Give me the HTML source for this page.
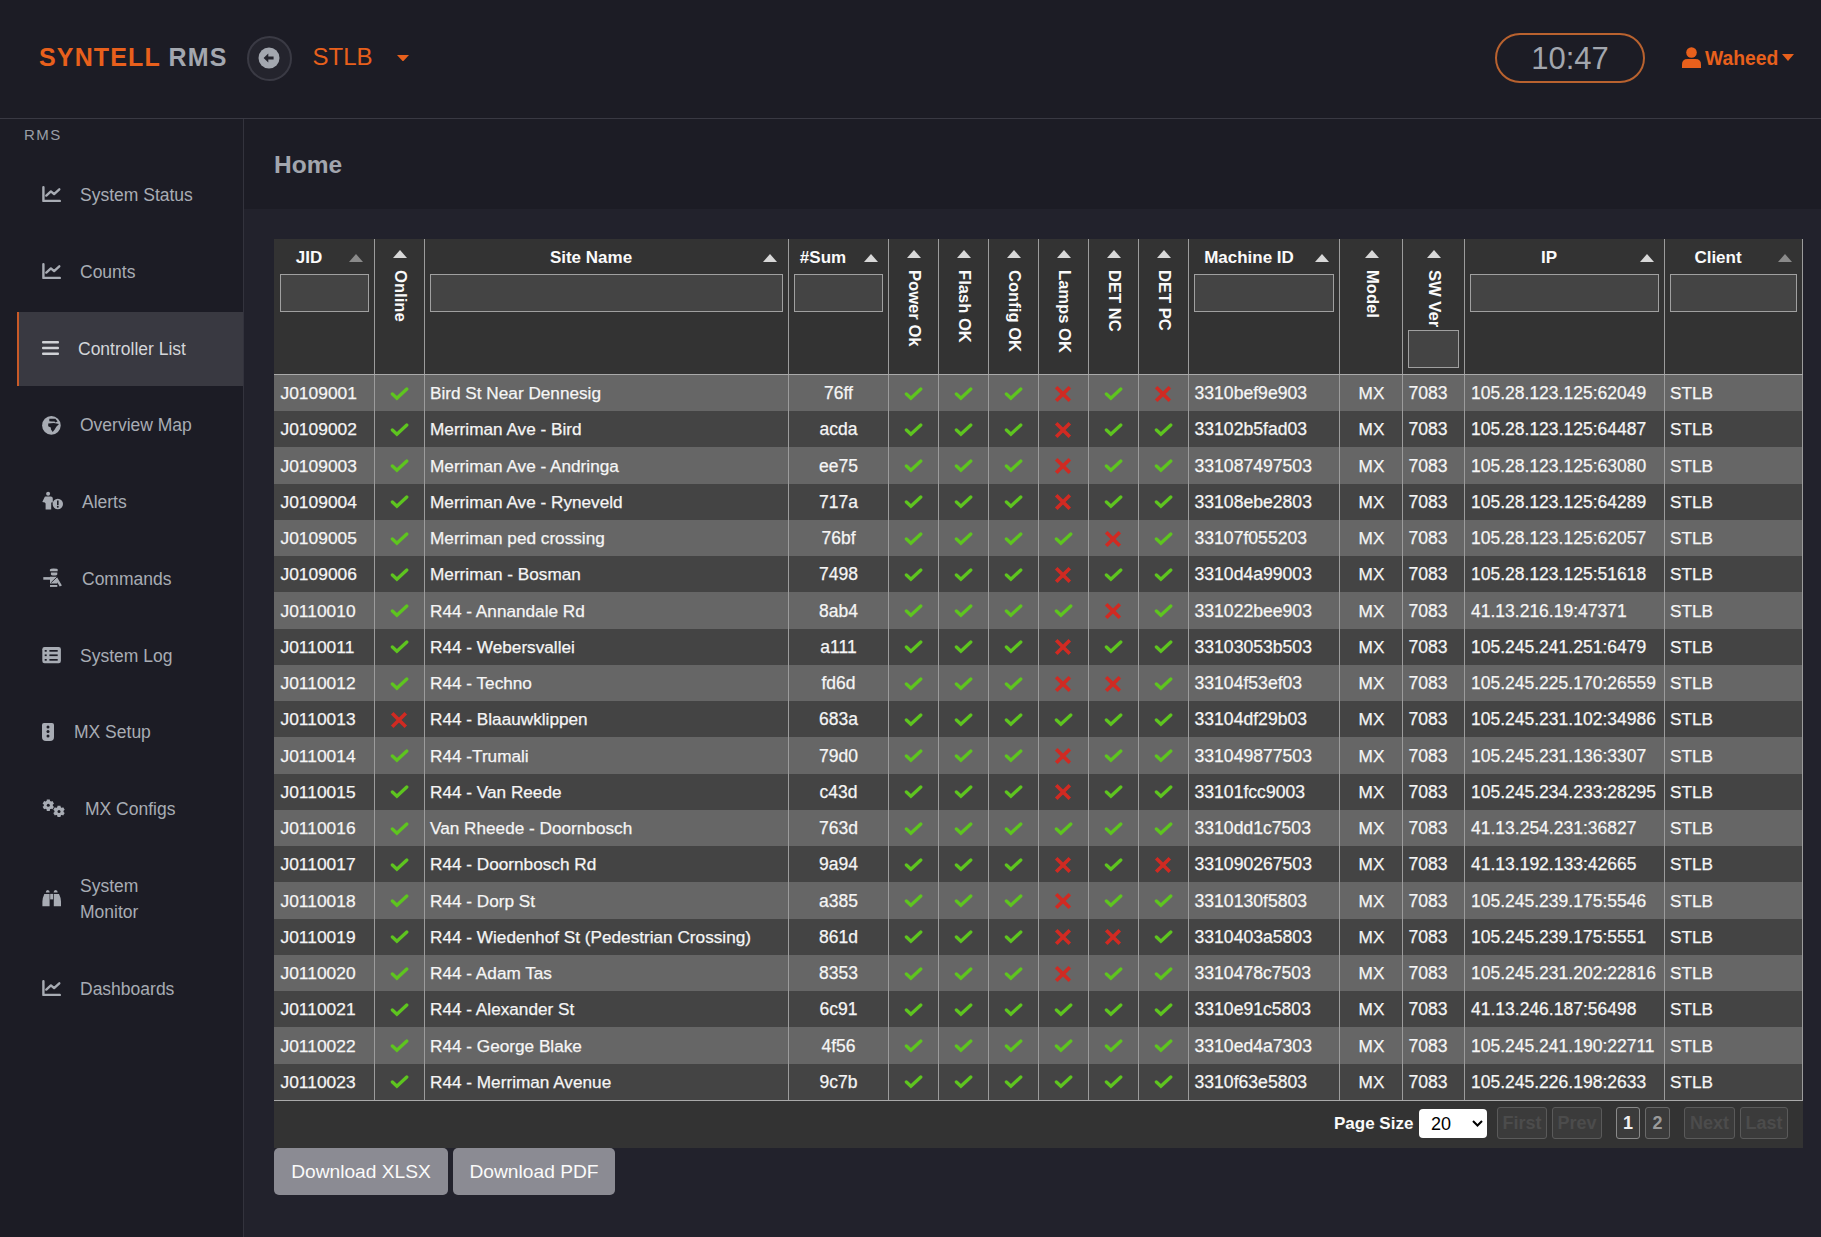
<!DOCTYPE html><html><head><meta charset="utf-8"><title>Syntell RMS</title><style>
*{box-sizing:border-box;margin:0;padding:0}
html,body{width:1821px;height:1237px;overflow:hidden;background:#1c1c25;font-family:"Liberation Sans",sans-serif}
.a{position:absolute}
.hdr{left:0;top:0;width:1821px;height:118px;background:#1c1c25}
.hline{left:0;top:118px;width:1821px;height:1px;background:#393943}
.sline{left:243px;top:119px;width:1px;height:1118px;background:#33333d}
.content{left:244px;top:209px;width:1577px;height:1028px;background:#22222c}
.brand{left:39px;top:41px;font-size:25px;font-weight:bold;letter-spacing:1.15px;white-space:nowrap;line-height:32px}
.brand .o{color:#e8601c}.brand .g{color:#a3a7af}
.circ{left:246.5px;top:35.5px;width:45px;height:45px;border-radius:50%;border:2.5px solid #3a3a44;background:#24242d}
.stlb{left:312.5px;top:40px;font-size:24px;color:#e8601c;line-height:34px}
.clock{left:1495px;top:33px;width:150px;height:50px;border:2px solid #b9622f;border-radius:25px;color:#a2a6ae;font-size:31px;text-align:center;line-height:48px}
.user{left:1705px;top:45.5px;font-size:19.3px;font-weight:bold;color:#e8601c;line-height:26px}
.side{color:#a8acb4;font-size:17.5px;line-height:26px;white-space:nowrap}
.rmsl{left:24px;top:124.6px;font-size:15px;color:#9a9ea6;letter-spacing:1.5px;line-height:20px}
.act{left:17px;top:312px;width:226px;height:74px;background:#393941;border-left:2.5px solid #c85a28}
.title{left:274px;top:150px;font-size:24.5px;font-weight:bold;color:#a2a6ae;line-height:30px}
.tbl{left:274px;top:239px;width:1529px;height:909px;background:#333333}
.row{left:274px;width:1528px;height:36.25px}
.odd{background:#666666}.even{background:#444444}
.vl{width:1px;background:#9c9c9c}
.hl{height:1px;background:#aaaaaa}
.cell{color:#f5f5f5;font-size:17.2px;line-height:36.25px;white-space:nowrap;-webkit-text-stroke:0.25px #f5f5f5}
.th{color:#fafafa;font-size:17px;font-weight:bold;line-height:22px;white-space:nowrap}
.inp{height:38px;border:1px solid #a0a0a0;background:#444444}
.rot{transform-origin:0 0;transform:rotate(90deg);color:#fafafa;font-size:16.6px;font-weight:bold;line-height:22px;white-space:nowrap}
.btn{background:#8b8b93;color:#fafafa;font-size:19.2px;border-radius:5px;text-align:center;line-height:48px}
.pb{border:1px solid #5a5a5a;background:#3b3b3b;border-radius:3px;color:#4c4c4c;font-size:18px;font-weight:bold;text-align:center;line-height:30px}
svg.ic{display:block}
</style></head><body>
<div class="a hdr"></div><div class="a hline"></div><div class="a sline"></div><div class="a content"></div>
<div class="a brand"><span class="o">SYNTELL</span><span style="display:inline-block;width:7.5px"></span><span class="g">RMS</span></div>
<div class="a circ"></div>
<svg class="a" style="left:258px;top:47px" width="22" height="22" viewBox="0 0 22 22"><circle cx="11" cy="11" r="10.5" fill="#a3a7af"/><path d="M5.6 11 L10.3 6.6 L10.3 9.4 L15.6 9.4 L15.6 12.6 L10.3 12.6 L10.3 15.4 Z" fill="#24242d"/></svg>
<div class="a stlb">STLB</div>
<svg class="a" style="left:396.5px;top:54.5px" width="12" height="6.5" viewBox="0 0 12 6.5"><path d="M0 0 L12 0 L6 6.5 Z" fill="#e8601c"/></svg>
<div class="a clock">10:47</div>
<svg class="a" style="left:1682px;top:47px" width="19" height="21" viewBox="0 0 19 21"><circle cx="9.5" cy="5.5" r="5.3" fill="#e8601c"/><path d="M0 21 L0 17.5 Q0 12 5.5 12 L13.5 12 Q19 12 19 17.5 L19 21 Z" fill="#e8601c"/></svg>
<div class="a user">Waheed</div>
<svg class="a" style="left:1782px;top:54px" width="12" height="7" viewBox="0 0 12 7"><path d="M0 0 L12 0 L6 7 Z" fill="#e8601c"/></svg>
<div class="a rmsl">RMS</div>
<div class="a act"></div>
<svg class="a" style="left:42px;top:186px" width="20" height="17" viewBox="0 0 20 17"><path d="M1.4 1.2 V14.9 H17.8" fill="none" stroke="#a8acb4" stroke-width="2.4" stroke-linecap="round" stroke-linejoin="round"/><path d="M4.3 9.6 L8.9 5.4 L12.1 8.1 L17.3 3.3" fill="none" stroke="#a8acb4" stroke-width="2.4" stroke-linecap="round" stroke-linejoin="round"/></svg>
<div class="a side" style="left:80px;top:182px;color:#a8acb4">System Status</div>
<svg class="a" style="left:42px;top:263px" width="20" height="17" viewBox="0 0 20 17"><path d="M1.4 1.2 V14.9 H17.8" fill="none" stroke="#a8acb4" stroke-width="2.4" stroke-linecap="round" stroke-linejoin="round"/><path d="M4.3 9.6 L8.9 5.4 L12.1 8.1 L17.3 3.3" fill="none" stroke="#a8acb4" stroke-width="2.4" stroke-linecap="round" stroke-linejoin="round"/></svg>
<div class="a side" style="left:80px;top:259px;color:#a8acb4">Counts</div>
<svg class="a" style="left:42px;top:341px" width="17" height="14" viewBox="0 0 17 14"><rect x="0" y="0" width="17" height="2.6" rx="1" fill="#d0d2d6"/><rect x="0" y="5.7" width="17" height="2.6" rx="1" fill="#d0d2d6"/><rect x="0" y="11.4" width="17" height="2.6" rx="1" fill="#d0d2d6"/></svg>
<div class="a side" style="left:78px;top:336px;color:#d4d6da">Controller List</div>
<svg class="a" style="left:42px;top:415.5px" width="19" height="19" viewBox="0 0 19 19"><circle cx="9.4" cy="9.4" r="9.3" fill="#a8acb4"/><path d="M7.3 2.7 L13.4 2.8 L15.6 5.6 L13.2 6.4 L12.6 5.5 L9.9 5.4 L7.3 5.3 Z M6.2 7.6 L11.8 7.1 L17 8.1 L14.3 10.7 L12.7 13.6 L10.7 16 L9 13.4 L8.8 11.6 L6.2 10.2 Z" fill="#1c1c25"/></svg>
<div class="a side" style="left:80px;top:412px;color:#a8acb4">Overview Map</div>
<svg class="a" style="left:42px;top:491px" width="21" height="19" viewBox="0 0 21 19"><circle cx="6.1" cy="2.8" r="2" fill="#a8acb4"/><path d="M3.5 5.6 H8.8 Q10.8 5.6 10.8 7.6 V11.6 H9.2 V18.6 H3.6 V12.4 L2.8 11.6 L0.3 10.9 L2.2 7 Q2.8 5.6 3.5 5.6 Z" fill="#a8acb4"/><circle cx="15.8" cy="13" r="5.2" fill="#a8acb4"/><rect x="15" y="9.5" width="1.6" height="4.6" fill="#1c1c25"/><circle cx="15.8" cy="15.8" r="0.95" fill="#1c1c25"/></svg>
<div class="a side" style="left:82px;top:489px;color:#a8acb4">Alerts</div>
<svg class="a" style="left:43px;top:568px" width="20" height="19" viewBox="0 0 20 19"><path d="M6.9 1.6 Q7.5 0.6 10.5 0.6 Q14.7 0.6 14.7 1.6 V3.2 H6.9 Z" fill="#a8acb4"/><path d="M7.9 4.4 H14.3 V6.2 Q14.3 7.6 11.1 7.6 Q7.9 7.6 7.9 6.2 Z" fill="#a8acb4"/><rect x="0.3" y="9.1" width="7" height="2.6" fill="#a8acb4"/><path d="M7 8.8 H13.8 L18.9 17.4 L16.7 18.4 L14.3 14.3 V15.6 H7 V11.7 Z" fill="#a8acb4"/><path d="M14 9 L8.2 14.6" stroke="#1c1c25" stroke-width="0.9"/><rect x="7" y="17" width="7.3" height="1.9" fill="#a8acb4"/></svg>
<div class="a side" style="left:82px;top:566px;color:#a8acb4">Commands</div>
<svg class="a" style="left:42px;top:647px" width="19" height="17" viewBox="0 0 19 17"><rect x="0.3" y="0" width="18.6" height="16.2" rx="2.2" fill="#a8acb4"/><rect x="2.7" y="3" width="2" height="1.7" fill="#1c1c25"/><rect x="7.4" y="3" width="8.3" height="1.7" fill="#1c1c25"/><rect x="2.7" y="7.4" width="2" height="1.7" fill="#1c1c25"/><rect x="7.4" y="7.4" width="8.3" height="1.7" fill="#1c1c25"/><rect x="2.7" y="12" width="2" height="1.7" fill="#1c1c25"/><rect x="7.4" y="12" width="8.3" height="1.7" fill="#1c1c25"/></svg>
<div class="a side" style="left:80px;top:643px;color:#a8acb4">System Log</div>
<svg class="a" style="left:42px;top:723px" width="13" height="19" viewBox="0 0 13 19"><path d="M2 0 H10 Q12 0 12 2 V14 Q12 18.1 8 18.1 H4 Q0 18.1 0 14 V2 Q0 0 2 0 Z" fill="#a8acb4"/><circle cx="6" cy="4" r="1.5" fill="#1c1c25"/><circle cx="6" cy="8.6" r="1.5" fill="#1c1c25"/><circle cx="6" cy="13.1" r="1.5" fill="#1c1c25"/></svg>
<div class="a side" style="left:74px;top:719px;color:#a8acb4">MX Setup</div>
<svg class="a" style="left:42px;top:799px" width="24" height="19" viewBox="0 0 24 19"><path d="M4.59 2.37 L4.78 0.50 L7.82 0.50 L8.01 2.37 L8.76 2.80 L10.48 2.04 L12.00 4.66 L10.48 5.77 L10.48 6.63 L12.00 7.74 L10.48 10.36 L8.76 9.60 L8.01 10.03 L7.82 11.90 L4.78 11.90 L4.59 10.03 L3.84 9.60 L2.12 10.36 L0.60 7.74 L2.12 6.63 L2.12 5.77 L0.60 4.66 L2.12 2.04 L3.84 2.80 Z" fill="#a8acb4"/><circle cx="6.3" cy="6.2" r="4.4" fill="#a8acb4"/><circle cx="6.3" cy="6.2" r="1.5" fill="#1c1c25"/><path d="M15.29 8.57 L15.48 6.70 L18.52 6.70 L18.71 8.57 L19.46 9.00 L21.18 8.24 L22.70 10.86 L21.18 11.97 L21.18 12.83 L22.70 13.94 L21.18 16.56 L19.46 15.80 L18.71 16.23 L18.52 18.10 L15.48 18.10 L15.29 16.23 L14.54 15.80 L12.82 16.56 L11.30 13.94 L12.82 12.83 L12.82 11.97 L11.30 10.86 L12.82 8.24 L14.54 9.00 Z" fill="#a8acb4"/><circle cx="17" cy="12.4" r="4.4" fill="#a8acb4"/><circle cx="17" cy="12.4" r="1.5" fill="#1c1c25"/></svg>
<div class="a side" style="left:85px;top:796px;color:#a8acb4">MX Configs</div>
<svg class="a" style="left:42px;top:890px" width="20" height="17" viewBox="0 0 20 17"><path d="M3.8 2.6 Q3.8 0 5.7 0 Q7.7 0 7.7 2.6 Z M11.6 2.6 Q11.6 0 13.6 0 Q15.7 0 15.7 2.6 Z" fill="#a8acb4"/><path d="M2.3 3.9 H7.6 V16.2 H0.4 V11.4 Q0.4 8 1.6 6 Z" fill="#a8acb4"/><path d="M11.8 3.9 H17 L17.8 6 Q19 8 19 11.4 V16.2 H11.8 Z" fill="#a8acb4"/><rect x="8.2" y="3.9" width="2.9" height="5.5" fill="#a8acb4"/></svg>
<div class="a side" style="left:80px;top:873px;color:#a8acb4">System</div>
<div class="a side" style="left:80px;top:899px;color:#a8acb4">Monitor</div>
<svg class="a" style="left:42px;top:980px" width="20" height="17" viewBox="0 0 20 17"><path d="M1.4 1.2 V14.9 H17.8" fill="none" stroke="#a8acb4" stroke-width="2.4" stroke-linecap="round" stroke-linejoin="round"/><path d="M4.3 9.6 L8.9 5.4 L12.1 8.1 L17.3 3.3" fill="none" stroke="#a8acb4" stroke-width="2.4" stroke-linecap="round" stroke-linejoin="round"/></svg>
<div class="a side" style="left:80px;top:976px;color:#a8acb4">Dashboards</div>
<div class="a title">Home</div>
<div class="a tbl"></div>
<div class="a row odd" style="top:375px;height:36px"></div>
<div class="a row even" style="top:411px;height:36px"></div>
<div class="a row odd" style="top:447px;height:37px"></div>
<div class="a row even" style="top:484px;height:36px"></div>
<div class="a row odd" style="top:520px;height:36px"></div>
<div class="a row even" style="top:556px;height:36px"></div>
<div class="a row odd" style="top:592px;height:37px"></div>
<div class="a row even" style="top:629px;height:36px"></div>
<div class="a row odd" style="top:665px;height:36px"></div>
<div class="a row even" style="top:701px;height:36px"></div>
<div class="a row odd" style="top:737px;height:37px"></div>
<div class="a row even" style="top:774px;height:36px"></div>
<div class="a row odd" style="top:810px;height:36px"></div>
<div class="a row even" style="top:846px;height:36px"></div>
<div class="a row odd" style="top:882px;height:37px"></div>
<div class="a row even" style="top:919px;height:36px"></div>
<div class="a row odd" style="top:955px;height:36px"></div>
<div class="a row even" style="top:991px;height:36px"></div>
<div class="a row odd" style="top:1027px;height:37px"></div>
<div class="a row even" style="top:1064px;height:36px"></div>
<div class="a vl" style="left:374px;top:239px;height:861px"></div>
<div class="a vl" style="left:424px;top:239px;height:861px"></div>
<div class="a vl" style="left:788px;top:239px;height:861px"></div>
<div class="a vl" style="left:888px;top:239px;height:861px"></div>
<div class="a vl" style="left:938px;top:239px;height:861px"></div>
<div class="a vl" style="left:988px;top:239px;height:861px"></div>
<div class="a vl" style="left:1038px;top:239px;height:861px"></div>
<div class="a vl" style="left:1088px;top:239px;height:861px"></div>
<div class="a vl" style="left:1138px;top:239px;height:861px"></div>
<div class="a vl" style="left:1188px;top:239px;height:861px"></div>
<div class="a vl" style="left:1339px;top:239px;height:861px"></div>
<div class="a vl" style="left:1402px;top:239px;height:861px"></div>
<div class="a vl" style="left:1464px;top:239px;height:861px"></div>
<div class="a vl" style="left:1664px;top:239px;height:861px"></div>
<div class="a vl" style="left:1802px;top:239px;height:861px"></div>
<div class="a hl" style="left:274px;top:374px;width:1529px"></div>
<div class="a hl" style="left:274px;top:1100px;width:1529px"></div>
<div class="a th" style="left:159px;width:300px;text-align:center;top:247px">JID</div>
<svg class="a" style="left:349px;top:254px" width="14" height="8" viewBox="0 0 14 8"><path d="M0 8 L7 0 L14 8 Z" fill="#8a8a8a"/></svg>
<div class="a inp" style="left:280px;top:274px;width:89px"></div>
<div class="a th" style="left:441px;width:300px;text-align:center;top:247px">Site Name</div>
<svg class="a" style="left:763px;top:254px" width="14" height="8" viewBox="0 0 14 8"><path d="M0 8 L7 0 L14 8 Z" fill="#d8d8d8"/></svg>
<div class="a inp" style="left:430px;top:274px;width:353px"></div>
<div class="a th" style="left:673px;width:300px;text-align:center;top:247px">#Sum</div>
<svg class="a" style="left:864px;top:254px" width="14" height="8" viewBox="0 0 14 8"><path d="M0 8 L7 0 L14 8 Z" fill="#d8d8d8"/></svg>
<div class="a inp" style="left:794px;top:274px;width:89px"></div>
<div class="a th" style="left:1099px;width:300px;text-align:center;top:247px">Machine ID</div>
<svg class="a" style="left:1315px;top:254px" width="14" height="8" viewBox="0 0 14 8"><path d="M0 8 L7 0 L14 8 Z" fill="#d8d8d8"/></svg>
<div class="a inp" style="left:1194px;top:274px;width:140px"></div>
<div class="a th" style="left:1399px;width:300px;text-align:center;top:247px">IP</div>
<svg class="a" style="left:1640px;top:254px" width="14" height="8" viewBox="0 0 14 8"><path d="M0 8 L7 0 L14 8 Z" fill="#d8d8d8"/></svg>
<div class="a inp" style="left:1470px;top:274px;width:189px"></div>
<div class="a th" style="left:1568px;width:300px;text-align:center;top:247px">Client</div>
<svg class="a" style="left:1778px;top:254px" width="14" height="8" viewBox="0 0 14 8"><path d="M0 8 L7 0 L14 8 Z" fill="#8a8a8a"/></svg>
<div class="a inp" style="left:1670px;top:274px;width:127px"></div>
<div class="a inp" style="left:1408px;top:330px;width:51px"></div>
<svg class="a" style="left:393.3px;top:250px" width="14" height="8" viewBox="0 0 14 8"><path d="M0 8 L7 0 L14 8 Z" fill="#d8d8d8"/></svg>
<div class="a rot" style="left:410.8px;top:270px">Online</div>
<svg class="a" style="left:907.3px;top:250px" width="14" height="8" viewBox="0 0 14 8"><path d="M0 8 L7 0 L14 8 Z" fill="#d8d8d8"/></svg>
<div class="a rot" style="left:924.8px;top:270px">Power Ok</div>
<svg class="a" style="left:957.3px;top:250px" width="14" height="8" viewBox="0 0 14 8"><path d="M0 8 L7 0 L14 8 Z" fill="#d8d8d8"/></svg>
<div class="a rot" style="left:974.8px;top:270px">Flash OK</div>
<svg class="a" style="left:1007.3px;top:250px" width="14" height="8" viewBox="0 0 14 8"><path d="M0 8 L7 0 L14 8 Z" fill="#d8d8d8"/></svg>
<div class="a rot" style="left:1024.8px;top:270px">Config OK</div>
<svg class="a" style="left:1057.3px;top:250px" width="14" height="8" viewBox="0 0 14 8"><path d="M0 8 L7 0 L14 8 Z" fill="#d8d8d8"/></svg>
<div class="a rot" style="left:1074.8px;top:270px">Lamps OK</div>
<svg class="a" style="left:1107.3px;top:250px" width="14" height="8" viewBox="0 0 14 8"><path d="M0 8 L7 0 L14 8 Z" fill="#d8d8d8"/></svg>
<div class="a rot" style="left:1124.8px;top:270px">DET NC</div>
<svg class="a" style="left:1157.3px;top:250px" width="14" height="8" viewBox="0 0 14 8"><path d="M0 8 L7 0 L14 8 Z" fill="#d8d8d8"/></svg>
<div class="a rot" style="left:1174.8px;top:270px">DET PC</div>
<svg class="a" style="left:1365.3px;top:250px" width="14" height="8" viewBox="0 0 14 8"><path d="M0 8 L7 0 L14 8 Z" fill="#d8d8d8"/></svg>
<div class="a rot" style="left:1382.8px;top:270px">Model</div>
<svg class="a" style="left:1427.3px;top:250px" width="14" height="8" viewBox="0 0 14 8"><path d="M0 8 L7 0 L14 8 Z" fill="#d8d8d8"/></svg>
<div class="a rot" style="left:1444.8px;top:270px">SW Ver</div>
<div class="a cell" style="font-size:17.4px;left:280.5px;top:375.0px">J0109001</div>
<div class="a cell" style="left:430px;top:375.0px">Bird St Near Dennesig</div>
<div class="a cell" style="font-size:17.5px;left:778.5px;width:120px;text-align:center;top:375.0px">76ff</div>
<div class="a cell" style="font-size:17.6px;left:1194.5px;top:375.0px">3310bef9e903</div>
<div class="a cell" style="left:1311.5px;width:120px;text-align:center;top:375.0px">MX</div>
<div class="a cell" style="font-size:17.6px;left:1408.5px;top:375.0px">7083</div>
<div class="a cell" style="font-size:17.5px;left:1471px;top:375.0px">105.28.123.125:62049</div>
<div class="a cell" style="left:1670px;top:375.0px">STLB</div>
<div class="a" style="left:389.5px;top:385.5px"><svg class="ic" width="19" height="15" viewBox="0 0 19 15"><path d="M2.4 8 L6.9 12.2 L16.8 3" fill="none" stroke="#5ec51f" stroke-width="3.3" stroke-linecap="round" stroke-linejoin="miter"/></svg></div>
<div class="a" style="left:903.5px;top:385.5px"><svg class="ic" width="19" height="15" viewBox="0 0 19 15"><path d="M2.4 8 L6.9 12.2 L16.8 3" fill="none" stroke="#5ec51f" stroke-width="3.3" stroke-linecap="round" stroke-linejoin="miter"/></svg></div>
<div class="a" style="left:953.5px;top:385.5px"><svg class="ic" width="19" height="15" viewBox="0 0 19 15"><path d="M2.4 8 L6.9 12.2 L16.8 3" fill="none" stroke="#5ec51f" stroke-width="3.3" stroke-linecap="round" stroke-linejoin="miter"/></svg></div>
<div class="a" style="left:1003.5px;top:385.5px"><svg class="ic" width="19" height="15" viewBox="0 0 19 15"><path d="M2.4 8 L6.9 12.2 L16.8 3" fill="none" stroke="#5ec51f" stroke-width="3.3" stroke-linecap="round" stroke-linejoin="miter"/></svg></div>
<div class="a" style="left:1054px;top:384.5px"><svg class="ic" width="18" height="18" viewBox="0 0 18 18"><path d="M2.2 2.2 L15.8 15.8 M15.8 2.2 L2.2 15.8" fill="none" stroke="#d12a22" stroke-width="3.6"/></svg></div>
<div class="a" style="left:1103.5px;top:385.5px"><svg class="ic" width="19" height="15" viewBox="0 0 19 15"><path d="M2.4 8 L6.9 12.2 L16.8 3" fill="none" stroke="#5ec51f" stroke-width="3.3" stroke-linecap="round" stroke-linejoin="miter"/></svg></div>
<div class="a" style="left:1154px;top:384.5px"><svg class="ic" width="18" height="18" viewBox="0 0 18 18"><path d="M2.2 2.2 L15.8 15.8 M15.8 2.2 L2.2 15.8" fill="none" stroke="#d12a22" stroke-width="3.6"/></svg></div>
<div class="a cell" style="font-size:17.4px;left:280.5px;top:411.25px">J0109002</div>
<div class="a cell" style="left:430px;top:411.25px">Merriman Ave - Bird</div>
<div class="a cell" style="font-size:17.5px;left:778.5px;width:120px;text-align:center;top:411.25px">acda</div>
<div class="a cell" style="font-size:17.6px;left:1194.5px;top:411.25px">33102b5fad03</div>
<div class="a cell" style="left:1311.5px;width:120px;text-align:center;top:411.25px">MX</div>
<div class="a cell" style="font-size:17.6px;left:1408.5px;top:411.25px">7083</div>
<div class="a cell" style="font-size:17.5px;left:1471px;top:411.25px">105.28.123.125:64487</div>
<div class="a cell" style="left:1670px;top:411.25px">STLB</div>
<div class="a" style="left:389.5px;top:421.75px"><svg class="ic" width="19" height="15" viewBox="0 0 19 15"><path d="M2.4 8 L6.9 12.2 L16.8 3" fill="none" stroke="#5ec51f" stroke-width="3.3" stroke-linecap="round" stroke-linejoin="miter"/></svg></div>
<div class="a" style="left:903.5px;top:421.75px"><svg class="ic" width="19" height="15" viewBox="0 0 19 15"><path d="M2.4 8 L6.9 12.2 L16.8 3" fill="none" stroke="#5ec51f" stroke-width="3.3" stroke-linecap="round" stroke-linejoin="miter"/></svg></div>
<div class="a" style="left:953.5px;top:421.75px"><svg class="ic" width="19" height="15" viewBox="0 0 19 15"><path d="M2.4 8 L6.9 12.2 L16.8 3" fill="none" stroke="#5ec51f" stroke-width="3.3" stroke-linecap="round" stroke-linejoin="miter"/></svg></div>
<div class="a" style="left:1003.5px;top:421.75px"><svg class="ic" width="19" height="15" viewBox="0 0 19 15"><path d="M2.4 8 L6.9 12.2 L16.8 3" fill="none" stroke="#5ec51f" stroke-width="3.3" stroke-linecap="round" stroke-linejoin="miter"/></svg></div>
<div class="a" style="left:1054px;top:420.75px"><svg class="ic" width="18" height="18" viewBox="0 0 18 18"><path d="M2.2 2.2 L15.8 15.8 M15.8 2.2 L2.2 15.8" fill="none" stroke="#d12a22" stroke-width="3.6"/></svg></div>
<div class="a" style="left:1103.5px;top:421.75px"><svg class="ic" width="19" height="15" viewBox="0 0 19 15"><path d="M2.4 8 L6.9 12.2 L16.8 3" fill="none" stroke="#5ec51f" stroke-width="3.3" stroke-linecap="round" stroke-linejoin="miter"/></svg></div>
<div class="a" style="left:1153.5px;top:421.75px"><svg class="ic" width="19" height="15" viewBox="0 0 19 15"><path d="M2.4 8 L6.9 12.2 L16.8 3" fill="none" stroke="#5ec51f" stroke-width="3.3" stroke-linecap="round" stroke-linejoin="miter"/></svg></div>
<div class="a cell" style="font-size:17.4px;left:280.5px;top:447.5px">J0109003</div>
<div class="a cell" style="left:430px;top:447.5px">Merriman Ave - Andringa</div>
<div class="a cell" style="font-size:17.5px;left:778.5px;width:120px;text-align:center;top:447.5px">ee75</div>
<div class="a cell" style="font-size:17.6px;left:1194.5px;top:447.5px">331087497503</div>
<div class="a cell" style="left:1311.5px;width:120px;text-align:center;top:447.5px">MX</div>
<div class="a cell" style="font-size:17.6px;left:1408.5px;top:447.5px">7083</div>
<div class="a cell" style="font-size:17.5px;left:1471px;top:447.5px">105.28.123.125:63080</div>
<div class="a cell" style="left:1670px;top:447.5px">STLB</div>
<div class="a" style="left:389.5px;top:458.0px"><svg class="ic" width="19" height="15" viewBox="0 0 19 15"><path d="M2.4 8 L6.9 12.2 L16.8 3" fill="none" stroke="#5ec51f" stroke-width="3.3" stroke-linecap="round" stroke-linejoin="miter"/></svg></div>
<div class="a" style="left:903.5px;top:458.0px"><svg class="ic" width="19" height="15" viewBox="0 0 19 15"><path d="M2.4 8 L6.9 12.2 L16.8 3" fill="none" stroke="#5ec51f" stroke-width="3.3" stroke-linecap="round" stroke-linejoin="miter"/></svg></div>
<div class="a" style="left:953.5px;top:458.0px"><svg class="ic" width="19" height="15" viewBox="0 0 19 15"><path d="M2.4 8 L6.9 12.2 L16.8 3" fill="none" stroke="#5ec51f" stroke-width="3.3" stroke-linecap="round" stroke-linejoin="miter"/></svg></div>
<div class="a" style="left:1003.5px;top:458.0px"><svg class="ic" width="19" height="15" viewBox="0 0 19 15"><path d="M2.4 8 L6.9 12.2 L16.8 3" fill="none" stroke="#5ec51f" stroke-width="3.3" stroke-linecap="round" stroke-linejoin="miter"/></svg></div>
<div class="a" style="left:1054px;top:457.0px"><svg class="ic" width="18" height="18" viewBox="0 0 18 18"><path d="M2.2 2.2 L15.8 15.8 M15.8 2.2 L2.2 15.8" fill="none" stroke="#d12a22" stroke-width="3.6"/></svg></div>
<div class="a" style="left:1103.5px;top:458.0px"><svg class="ic" width="19" height="15" viewBox="0 0 19 15"><path d="M2.4 8 L6.9 12.2 L16.8 3" fill="none" stroke="#5ec51f" stroke-width="3.3" stroke-linecap="round" stroke-linejoin="miter"/></svg></div>
<div class="a" style="left:1153.5px;top:458.0px"><svg class="ic" width="19" height="15" viewBox="0 0 19 15"><path d="M2.4 8 L6.9 12.2 L16.8 3" fill="none" stroke="#5ec51f" stroke-width="3.3" stroke-linecap="round" stroke-linejoin="miter"/></svg></div>
<div class="a cell" style="font-size:17.4px;left:280.5px;top:483.75px">J0109004</div>
<div class="a cell" style="left:430px;top:483.75px">Merriman Ave - Ryneveld</div>
<div class="a cell" style="font-size:17.5px;left:778.5px;width:120px;text-align:center;top:483.75px">717a</div>
<div class="a cell" style="font-size:17.6px;left:1194.5px;top:483.75px">33108ebe2803</div>
<div class="a cell" style="left:1311.5px;width:120px;text-align:center;top:483.75px">MX</div>
<div class="a cell" style="font-size:17.6px;left:1408.5px;top:483.75px">7083</div>
<div class="a cell" style="font-size:17.5px;left:1471px;top:483.75px">105.28.123.125:64289</div>
<div class="a cell" style="left:1670px;top:483.75px">STLB</div>
<div class="a" style="left:389.5px;top:494.25px"><svg class="ic" width="19" height="15" viewBox="0 0 19 15"><path d="M2.4 8 L6.9 12.2 L16.8 3" fill="none" stroke="#5ec51f" stroke-width="3.3" stroke-linecap="round" stroke-linejoin="miter"/></svg></div>
<div class="a" style="left:903.5px;top:494.25px"><svg class="ic" width="19" height="15" viewBox="0 0 19 15"><path d="M2.4 8 L6.9 12.2 L16.8 3" fill="none" stroke="#5ec51f" stroke-width="3.3" stroke-linecap="round" stroke-linejoin="miter"/></svg></div>
<div class="a" style="left:953.5px;top:494.25px"><svg class="ic" width="19" height="15" viewBox="0 0 19 15"><path d="M2.4 8 L6.9 12.2 L16.8 3" fill="none" stroke="#5ec51f" stroke-width="3.3" stroke-linecap="round" stroke-linejoin="miter"/></svg></div>
<div class="a" style="left:1003.5px;top:494.25px"><svg class="ic" width="19" height="15" viewBox="0 0 19 15"><path d="M2.4 8 L6.9 12.2 L16.8 3" fill="none" stroke="#5ec51f" stroke-width="3.3" stroke-linecap="round" stroke-linejoin="miter"/></svg></div>
<div class="a" style="left:1054px;top:493.25px"><svg class="ic" width="18" height="18" viewBox="0 0 18 18"><path d="M2.2 2.2 L15.8 15.8 M15.8 2.2 L2.2 15.8" fill="none" stroke="#d12a22" stroke-width="3.6"/></svg></div>
<div class="a" style="left:1103.5px;top:494.25px"><svg class="ic" width="19" height="15" viewBox="0 0 19 15"><path d="M2.4 8 L6.9 12.2 L16.8 3" fill="none" stroke="#5ec51f" stroke-width="3.3" stroke-linecap="round" stroke-linejoin="miter"/></svg></div>
<div class="a" style="left:1153.5px;top:494.25px"><svg class="ic" width="19" height="15" viewBox="0 0 19 15"><path d="M2.4 8 L6.9 12.2 L16.8 3" fill="none" stroke="#5ec51f" stroke-width="3.3" stroke-linecap="round" stroke-linejoin="miter"/></svg></div>
<div class="a cell" style="font-size:17.4px;left:280.5px;top:520.0px">J0109005</div>
<div class="a cell" style="left:430px;top:520.0px">Merriman ped crossing</div>
<div class="a cell" style="font-size:17.5px;left:778.5px;width:120px;text-align:center;top:520.0px">76bf</div>
<div class="a cell" style="font-size:17.6px;left:1194.5px;top:520.0px">33107f055203</div>
<div class="a cell" style="left:1311.5px;width:120px;text-align:center;top:520.0px">MX</div>
<div class="a cell" style="font-size:17.6px;left:1408.5px;top:520.0px">7083</div>
<div class="a cell" style="font-size:17.5px;left:1471px;top:520.0px">105.28.123.125:62057</div>
<div class="a cell" style="left:1670px;top:520.0px">STLB</div>
<div class="a" style="left:389.5px;top:530.5px"><svg class="ic" width="19" height="15" viewBox="0 0 19 15"><path d="M2.4 8 L6.9 12.2 L16.8 3" fill="none" stroke="#5ec51f" stroke-width="3.3" stroke-linecap="round" stroke-linejoin="miter"/></svg></div>
<div class="a" style="left:903.5px;top:530.5px"><svg class="ic" width="19" height="15" viewBox="0 0 19 15"><path d="M2.4 8 L6.9 12.2 L16.8 3" fill="none" stroke="#5ec51f" stroke-width="3.3" stroke-linecap="round" stroke-linejoin="miter"/></svg></div>
<div class="a" style="left:953.5px;top:530.5px"><svg class="ic" width="19" height="15" viewBox="0 0 19 15"><path d="M2.4 8 L6.9 12.2 L16.8 3" fill="none" stroke="#5ec51f" stroke-width="3.3" stroke-linecap="round" stroke-linejoin="miter"/></svg></div>
<div class="a" style="left:1003.5px;top:530.5px"><svg class="ic" width="19" height="15" viewBox="0 0 19 15"><path d="M2.4 8 L6.9 12.2 L16.8 3" fill="none" stroke="#5ec51f" stroke-width="3.3" stroke-linecap="round" stroke-linejoin="miter"/></svg></div>
<div class="a" style="left:1053.5px;top:530.5px"><svg class="ic" width="19" height="15" viewBox="0 0 19 15"><path d="M2.4 8 L6.9 12.2 L16.8 3" fill="none" stroke="#5ec51f" stroke-width="3.3" stroke-linecap="round" stroke-linejoin="miter"/></svg></div>
<div class="a" style="left:1104px;top:529.5px"><svg class="ic" width="18" height="18" viewBox="0 0 18 18"><path d="M2.2 2.2 L15.8 15.8 M15.8 2.2 L2.2 15.8" fill="none" stroke="#d12a22" stroke-width="3.6"/></svg></div>
<div class="a" style="left:1153.5px;top:530.5px"><svg class="ic" width="19" height="15" viewBox="0 0 19 15"><path d="M2.4 8 L6.9 12.2 L16.8 3" fill="none" stroke="#5ec51f" stroke-width="3.3" stroke-linecap="round" stroke-linejoin="miter"/></svg></div>
<div class="a cell" style="font-size:17.4px;left:280.5px;top:556.25px">J0109006</div>
<div class="a cell" style="left:430px;top:556.25px">Merriman - Bosman</div>
<div class="a cell" style="font-size:17.5px;left:778.5px;width:120px;text-align:center;top:556.25px">7498</div>
<div class="a cell" style="font-size:17.6px;left:1194.5px;top:556.25px">3310d4a99003</div>
<div class="a cell" style="left:1311.5px;width:120px;text-align:center;top:556.25px">MX</div>
<div class="a cell" style="font-size:17.6px;left:1408.5px;top:556.25px">7083</div>
<div class="a cell" style="font-size:17.5px;left:1471px;top:556.25px">105.28.123.125:51618</div>
<div class="a cell" style="left:1670px;top:556.25px">STLB</div>
<div class="a" style="left:389.5px;top:566.75px"><svg class="ic" width="19" height="15" viewBox="0 0 19 15"><path d="M2.4 8 L6.9 12.2 L16.8 3" fill="none" stroke="#5ec51f" stroke-width="3.3" stroke-linecap="round" stroke-linejoin="miter"/></svg></div>
<div class="a" style="left:903.5px;top:566.75px"><svg class="ic" width="19" height="15" viewBox="0 0 19 15"><path d="M2.4 8 L6.9 12.2 L16.8 3" fill="none" stroke="#5ec51f" stroke-width="3.3" stroke-linecap="round" stroke-linejoin="miter"/></svg></div>
<div class="a" style="left:953.5px;top:566.75px"><svg class="ic" width="19" height="15" viewBox="0 0 19 15"><path d="M2.4 8 L6.9 12.2 L16.8 3" fill="none" stroke="#5ec51f" stroke-width="3.3" stroke-linecap="round" stroke-linejoin="miter"/></svg></div>
<div class="a" style="left:1003.5px;top:566.75px"><svg class="ic" width="19" height="15" viewBox="0 0 19 15"><path d="M2.4 8 L6.9 12.2 L16.8 3" fill="none" stroke="#5ec51f" stroke-width="3.3" stroke-linecap="round" stroke-linejoin="miter"/></svg></div>
<div class="a" style="left:1054px;top:565.75px"><svg class="ic" width="18" height="18" viewBox="0 0 18 18"><path d="M2.2 2.2 L15.8 15.8 M15.8 2.2 L2.2 15.8" fill="none" stroke="#d12a22" stroke-width="3.6"/></svg></div>
<div class="a" style="left:1103.5px;top:566.75px"><svg class="ic" width="19" height="15" viewBox="0 0 19 15"><path d="M2.4 8 L6.9 12.2 L16.8 3" fill="none" stroke="#5ec51f" stroke-width="3.3" stroke-linecap="round" stroke-linejoin="miter"/></svg></div>
<div class="a" style="left:1153.5px;top:566.75px"><svg class="ic" width="19" height="15" viewBox="0 0 19 15"><path d="M2.4 8 L6.9 12.2 L16.8 3" fill="none" stroke="#5ec51f" stroke-width="3.3" stroke-linecap="round" stroke-linejoin="miter"/></svg></div>
<div class="a cell" style="font-size:17.4px;left:280.5px;top:592.5px">J0110010</div>
<div class="a cell" style="left:430px;top:592.5px">R44 - Annandale Rd</div>
<div class="a cell" style="font-size:17.5px;left:778.5px;width:120px;text-align:center;top:592.5px">8ab4</div>
<div class="a cell" style="font-size:17.6px;left:1194.5px;top:592.5px">331022bee903</div>
<div class="a cell" style="left:1311.5px;width:120px;text-align:center;top:592.5px">MX</div>
<div class="a cell" style="font-size:17.6px;left:1408.5px;top:592.5px">7083</div>
<div class="a cell" style="font-size:17.5px;left:1471px;top:592.5px">41.13.216.19:47371</div>
<div class="a cell" style="left:1670px;top:592.5px">STLB</div>
<div class="a" style="left:389.5px;top:603.0px"><svg class="ic" width="19" height="15" viewBox="0 0 19 15"><path d="M2.4 8 L6.9 12.2 L16.8 3" fill="none" stroke="#5ec51f" stroke-width="3.3" stroke-linecap="round" stroke-linejoin="miter"/></svg></div>
<div class="a" style="left:903.5px;top:603.0px"><svg class="ic" width="19" height="15" viewBox="0 0 19 15"><path d="M2.4 8 L6.9 12.2 L16.8 3" fill="none" stroke="#5ec51f" stroke-width="3.3" stroke-linecap="round" stroke-linejoin="miter"/></svg></div>
<div class="a" style="left:953.5px;top:603.0px"><svg class="ic" width="19" height="15" viewBox="0 0 19 15"><path d="M2.4 8 L6.9 12.2 L16.8 3" fill="none" stroke="#5ec51f" stroke-width="3.3" stroke-linecap="round" stroke-linejoin="miter"/></svg></div>
<div class="a" style="left:1003.5px;top:603.0px"><svg class="ic" width="19" height="15" viewBox="0 0 19 15"><path d="M2.4 8 L6.9 12.2 L16.8 3" fill="none" stroke="#5ec51f" stroke-width="3.3" stroke-linecap="round" stroke-linejoin="miter"/></svg></div>
<div class="a" style="left:1053.5px;top:603.0px"><svg class="ic" width="19" height="15" viewBox="0 0 19 15"><path d="M2.4 8 L6.9 12.2 L16.8 3" fill="none" stroke="#5ec51f" stroke-width="3.3" stroke-linecap="round" stroke-linejoin="miter"/></svg></div>
<div class="a" style="left:1104px;top:602.0px"><svg class="ic" width="18" height="18" viewBox="0 0 18 18"><path d="M2.2 2.2 L15.8 15.8 M15.8 2.2 L2.2 15.8" fill="none" stroke="#d12a22" stroke-width="3.6"/></svg></div>
<div class="a" style="left:1153.5px;top:603.0px"><svg class="ic" width="19" height="15" viewBox="0 0 19 15"><path d="M2.4 8 L6.9 12.2 L16.8 3" fill="none" stroke="#5ec51f" stroke-width="3.3" stroke-linecap="round" stroke-linejoin="miter"/></svg></div>
<div class="a cell" style="font-size:17.4px;left:280.5px;top:628.75px">J0110011</div>
<div class="a cell" style="left:430px;top:628.75px">R44 - Webersvallei</div>
<div class="a cell" style="font-size:17.5px;left:778.5px;width:120px;text-align:center;top:628.75px">a111</div>
<div class="a cell" style="font-size:17.6px;left:1194.5px;top:628.75px">33103053b503</div>
<div class="a cell" style="left:1311.5px;width:120px;text-align:center;top:628.75px">MX</div>
<div class="a cell" style="font-size:17.6px;left:1408.5px;top:628.75px">7083</div>
<div class="a cell" style="font-size:17.5px;left:1471px;top:628.75px">105.245.241.251:6479</div>
<div class="a cell" style="left:1670px;top:628.75px">STLB</div>
<div class="a" style="left:389.5px;top:639.25px"><svg class="ic" width="19" height="15" viewBox="0 0 19 15"><path d="M2.4 8 L6.9 12.2 L16.8 3" fill="none" stroke="#5ec51f" stroke-width="3.3" stroke-linecap="round" stroke-linejoin="miter"/></svg></div>
<div class="a" style="left:903.5px;top:639.25px"><svg class="ic" width="19" height="15" viewBox="0 0 19 15"><path d="M2.4 8 L6.9 12.2 L16.8 3" fill="none" stroke="#5ec51f" stroke-width="3.3" stroke-linecap="round" stroke-linejoin="miter"/></svg></div>
<div class="a" style="left:953.5px;top:639.25px"><svg class="ic" width="19" height="15" viewBox="0 0 19 15"><path d="M2.4 8 L6.9 12.2 L16.8 3" fill="none" stroke="#5ec51f" stroke-width="3.3" stroke-linecap="round" stroke-linejoin="miter"/></svg></div>
<div class="a" style="left:1003.5px;top:639.25px"><svg class="ic" width="19" height="15" viewBox="0 0 19 15"><path d="M2.4 8 L6.9 12.2 L16.8 3" fill="none" stroke="#5ec51f" stroke-width="3.3" stroke-linecap="round" stroke-linejoin="miter"/></svg></div>
<div class="a" style="left:1054px;top:638.25px"><svg class="ic" width="18" height="18" viewBox="0 0 18 18"><path d="M2.2 2.2 L15.8 15.8 M15.8 2.2 L2.2 15.8" fill="none" stroke="#d12a22" stroke-width="3.6"/></svg></div>
<div class="a" style="left:1103.5px;top:639.25px"><svg class="ic" width="19" height="15" viewBox="0 0 19 15"><path d="M2.4 8 L6.9 12.2 L16.8 3" fill="none" stroke="#5ec51f" stroke-width="3.3" stroke-linecap="round" stroke-linejoin="miter"/></svg></div>
<div class="a" style="left:1153.5px;top:639.25px"><svg class="ic" width="19" height="15" viewBox="0 0 19 15"><path d="M2.4 8 L6.9 12.2 L16.8 3" fill="none" stroke="#5ec51f" stroke-width="3.3" stroke-linecap="round" stroke-linejoin="miter"/></svg></div>
<div class="a cell" style="font-size:17.4px;left:280.5px;top:665.0px">J0110012</div>
<div class="a cell" style="left:430px;top:665.0px">R44 - Techno</div>
<div class="a cell" style="font-size:17.5px;left:778.5px;width:120px;text-align:center;top:665.0px">fd6d</div>
<div class="a cell" style="font-size:17.6px;left:1194.5px;top:665.0px">33104f53ef03</div>
<div class="a cell" style="left:1311.5px;width:120px;text-align:center;top:665.0px">MX</div>
<div class="a cell" style="font-size:17.6px;left:1408.5px;top:665.0px">7083</div>
<div class="a cell" style="font-size:17.5px;left:1471px;top:665.0px">105.245.225.170:26559</div>
<div class="a cell" style="left:1670px;top:665.0px">STLB</div>
<div class="a" style="left:389.5px;top:675.5px"><svg class="ic" width="19" height="15" viewBox="0 0 19 15"><path d="M2.4 8 L6.9 12.2 L16.8 3" fill="none" stroke="#5ec51f" stroke-width="3.3" stroke-linecap="round" stroke-linejoin="miter"/></svg></div>
<div class="a" style="left:903.5px;top:675.5px"><svg class="ic" width="19" height="15" viewBox="0 0 19 15"><path d="M2.4 8 L6.9 12.2 L16.8 3" fill="none" stroke="#5ec51f" stroke-width="3.3" stroke-linecap="round" stroke-linejoin="miter"/></svg></div>
<div class="a" style="left:953.5px;top:675.5px"><svg class="ic" width="19" height="15" viewBox="0 0 19 15"><path d="M2.4 8 L6.9 12.2 L16.8 3" fill="none" stroke="#5ec51f" stroke-width="3.3" stroke-linecap="round" stroke-linejoin="miter"/></svg></div>
<div class="a" style="left:1003.5px;top:675.5px"><svg class="ic" width="19" height="15" viewBox="0 0 19 15"><path d="M2.4 8 L6.9 12.2 L16.8 3" fill="none" stroke="#5ec51f" stroke-width="3.3" stroke-linecap="round" stroke-linejoin="miter"/></svg></div>
<div class="a" style="left:1054px;top:674.5px"><svg class="ic" width="18" height="18" viewBox="0 0 18 18"><path d="M2.2 2.2 L15.8 15.8 M15.8 2.2 L2.2 15.8" fill="none" stroke="#d12a22" stroke-width="3.6"/></svg></div>
<div class="a" style="left:1104px;top:674.5px"><svg class="ic" width="18" height="18" viewBox="0 0 18 18"><path d="M2.2 2.2 L15.8 15.8 M15.8 2.2 L2.2 15.8" fill="none" stroke="#d12a22" stroke-width="3.6"/></svg></div>
<div class="a" style="left:1153.5px;top:675.5px"><svg class="ic" width="19" height="15" viewBox="0 0 19 15"><path d="M2.4 8 L6.9 12.2 L16.8 3" fill="none" stroke="#5ec51f" stroke-width="3.3" stroke-linecap="round" stroke-linejoin="miter"/></svg></div>
<div class="a cell" style="font-size:17.4px;left:280.5px;top:701.25px">J0110013</div>
<div class="a cell" style="left:430px;top:701.25px">R44 - Blaauwklippen</div>
<div class="a cell" style="font-size:17.5px;left:778.5px;width:120px;text-align:center;top:701.25px">683a</div>
<div class="a cell" style="font-size:17.6px;left:1194.5px;top:701.25px">33104df29b03</div>
<div class="a cell" style="left:1311.5px;width:120px;text-align:center;top:701.25px">MX</div>
<div class="a cell" style="font-size:17.6px;left:1408.5px;top:701.25px">7083</div>
<div class="a cell" style="font-size:17.5px;left:1471px;top:701.25px">105.245.231.102:34986</div>
<div class="a cell" style="left:1670px;top:701.25px">STLB</div>
<div class="a" style="left:390px;top:710.75px"><svg class="ic" width="18" height="18" viewBox="0 0 18 18"><path d="M2.2 2.2 L15.8 15.8 M15.8 2.2 L2.2 15.8" fill="none" stroke="#d12a22" stroke-width="3.6"/></svg></div>
<div class="a" style="left:903.5px;top:711.75px"><svg class="ic" width="19" height="15" viewBox="0 0 19 15"><path d="M2.4 8 L6.9 12.2 L16.8 3" fill="none" stroke="#5ec51f" stroke-width="3.3" stroke-linecap="round" stroke-linejoin="miter"/></svg></div>
<div class="a" style="left:953.5px;top:711.75px"><svg class="ic" width="19" height="15" viewBox="0 0 19 15"><path d="M2.4 8 L6.9 12.2 L16.8 3" fill="none" stroke="#5ec51f" stroke-width="3.3" stroke-linecap="round" stroke-linejoin="miter"/></svg></div>
<div class="a" style="left:1003.5px;top:711.75px"><svg class="ic" width="19" height="15" viewBox="0 0 19 15"><path d="M2.4 8 L6.9 12.2 L16.8 3" fill="none" stroke="#5ec51f" stroke-width="3.3" stroke-linecap="round" stroke-linejoin="miter"/></svg></div>
<div class="a" style="left:1053.5px;top:711.75px"><svg class="ic" width="19" height="15" viewBox="0 0 19 15"><path d="M2.4 8 L6.9 12.2 L16.8 3" fill="none" stroke="#5ec51f" stroke-width="3.3" stroke-linecap="round" stroke-linejoin="miter"/></svg></div>
<div class="a" style="left:1103.5px;top:711.75px"><svg class="ic" width="19" height="15" viewBox="0 0 19 15"><path d="M2.4 8 L6.9 12.2 L16.8 3" fill="none" stroke="#5ec51f" stroke-width="3.3" stroke-linecap="round" stroke-linejoin="miter"/></svg></div>
<div class="a" style="left:1153.5px;top:711.75px"><svg class="ic" width="19" height="15" viewBox="0 0 19 15"><path d="M2.4 8 L6.9 12.2 L16.8 3" fill="none" stroke="#5ec51f" stroke-width="3.3" stroke-linecap="round" stroke-linejoin="miter"/></svg></div>
<div class="a cell" style="font-size:17.4px;left:280.5px;top:737.5px">J0110014</div>
<div class="a cell" style="left:430px;top:737.5px">R44 -Trumali</div>
<div class="a cell" style="font-size:17.5px;left:778.5px;width:120px;text-align:center;top:737.5px">79d0</div>
<div class="a cell" style="font-size:17.6px;left:1194.5px;top:737.5px">331049877503</div>
<div class="a cell" style="left:1311.5px;width:120px;text-align:center;top:737.5px">MX</div>
<div class="a cell" style="font-size:17.6px;left:1408.5px;top:737.5px">7083</div>
<div class="a cell" style="font-size:17.5px;left:1471px;top:737.5px">105.245.231.136:3307</div>
<div class="a cell" style="left:1670px;top:737.5px">STLB</div>
<div class="a" style="left:389.5px;top:748.0px"><svg class="ic" width="19" height="15" viewBox="0 0 19 15"><path d="M2.4 8 L6.9 12.2 L16.8 3" fill="none" stroke="#5ec51f" stroke-width="3.3" stroke-linecap="round" stroke-linejoin="miter"/></svg></div>
<div class="a" style="left:903.5px;top:748.0px"><svg class="ic" width="19" height="15" viewBox="0 0 19 15"><path d="M2.4 8 L6.9 12.2 L16.8 3" fill="none" stroke="#5ec51f" stroke-width="3.3" stroke-linecap="round" stroke-linejoin="miter"/></svg></div>
<div class="a" style="left:953.5px;top:748.0px"><svg class="ic" width="19" height="15" viewBox="0 0 19 15"><path d="M2.4 8 L6.9 12.2 L16.8 3" fill="none" stroke="#5ec51f" stroke-width="3.3" stroke-linecap="round" stroke-linejoin="miter"/></svg></div>
<div class="a" style="left:1003.5px;top:748.0px"><svg class="ic" width="19" height="15" viewBox="0 0 19 15"><path d="M2.4 8 L6.9 12.2 L16.8 3" fill="none" stroke="#5ec51f" stroke-width="3.3" stroke-linecap="round" stroke-linejoin="miter"/></svg></div>
<div class="a" style="left:1054px;top:747.0px"><svg class="ic" width="18" height="18" viewBox="0 0 18 18"><path d="M2.2 2.2 L15.8 15.8 M15.8 2.2 L2.2 15.8" fill="none" stroke="#d12a22" stroke-width="3.6"/></svg></div>
<div class="a" style="left:1103.5px;top:748.0px"><svg class="ic" width="19" height="15" viewBox="0 0 19 15"><path d="M2.4 8 L6.9 12.2 L16.8 3" fill="none" stroke="#5ec51f" stroke-width="3.3" stroke-linecap="round" stroke-linejoin="miter"/></svg></div>
<div class="a" style="left:1153.5px;top:748.0px"><svg class="ic" width="19" height="15" viewBox="0 0 19 15"><path d="M2.4 8 L6.9 12.2 L16.8 3" fill="none" stroke="#5ec51f" stroke-width="3.3" stroke-linecap="round" stroke-linejoin="miter"/></svg></div>
<div class="a cell" style="font-size:17.4px;left:280.5px;top:773.75px">J0110015</div>
<div class="a cell" style="left:430px;top:773.75px">R44 - Van Reede</div>
<div class="a cell" style="font-size:17.5px;left:778.5px;width:120px;text-align:center;top:773.75px">c43d</div>
<div class="a cell" style="font-size:17.6px;left:1194.5px;top:773.75px">33101fcc9003</div>
<div class="a cell" style="left:1311.5px;width:120px;text-align:center;top:773.75px">MX</div>
<div class="a cell" style="font-size:17.6px;left:1408.5px;top:773.75px">7083</div>
<div class="a cell" style="font-size:17.5px;left:1471px;top:773.75px">105.245.234.233:28295</div>
<div class="a cell" style="left:1670px;top:773.75px">STLB</div>
<div class="a" style="left:389.5px;top:784.25px"><svg class="ic" width="19" height="15" viewBox="0 0 19 15"><path d="M2.4 8 L6.9 12.2 L16.8 3" fill="none" stroke="#5ec51f" stroke-width="3.3" stroke-linecap="round" stroke-linejoin="miter"/></svg></div>
<div class="a" style="left:903.5px;top:784.25px"><svg class="ic" width="19" height="15" viewBox="0 0 19 15"><path d="M2.4 8 L6.9 12.2 L16.8 3" fill="none" stroke="#5ec51f" stroke-width="3.3" stroke-linecap="round" stroke-linejoin="miter"/></svg></div>
<div class="a" style="left:953.5px;top:784.25px"><svg class="ic" width="19" height="15" viewBox="0 0 19 15"><path d="M2.4 8 L6.9 12.2 L16.8 3" fill="none" stroke="#5ec51f" stroke-width="3.3" stroke-linecap="round" stroke-linejoin="miter"/></svg></div>
<div class="a" style="left:1003.5px;top:784.25px"><svg class="ic" width="19" height="15" viewBox="0 0 19 15"><path d="M2.4 8 L6.9 12.2 L16.8 3" fill="none" stroke="#5ec51f" stroke-width="3.3" stroke-linecap="round" stroke-linejoin="miter"/></svg></div>
<div class="a" style="left:1054px;top:783.25px"><svg class="ic" width="18" height="18" viewBox="0 0 18 18"><path d="M2.2 2.2 L15.8 15.8 M15.8 2.2 L2.2 15.8" fill="none" stroke="#d12a22" stroke-width="3.6"/></svg></div>
<div class="a" style="left:1103.5px;top:784.25px"><svg class="ic" width="19" height="15" viewBox="0 0 19 15"><path d="M2.4 8 L6.9 12.2 L16.8 3" fill="none" stroke="#5ec51f" stroke-width="3.3" stroke-linecap="round" stroke-linejoin="miter"/></svg></div>
<div class="a" style="left:1153.5px;top:784.25px"><svg class="ic" width="19" height="15" viewBox="0 0 19 15"><path d="M2.4 8 L6.9 12.2 L16.8 3" fill="none" stroke="#5ec51f" stroke-width="3.3" stroke-linecap="round" stroke-linejoin="miter"/></svg></div>
<div class="a cell" style="font-size:17.4px;left:280.5px;top:810.0px">J0110016</div>
<div class="a cell" style="left:430px;top:810.0px">Van Rheede - Doornbosch</div>
<div class="a cell" style="font-size:17.5px;left:778.5px;width:120px;text-align:center;top:810.0px">763d</div>
<div class="a cell" style="font-size:17.6px;left:1194.5px;top:810.0px">3310dd1c7503</div>
<div class="a cell" style="left:1311.5px;width:120px;text-align:center;top:810.0px">MX</div>
<div class="a cell" style="font-size:17.6px;left:1408.5px;top:810.0px">7083</div>
<div class="a cell" style="font-size:17.5px;left:1471px;top:810.0px">41.13.254.231:36827</div>
<div class="a cell" style="left:1670px;top:810.0px">STLB</div>
<div class="a" style="left:389.5px;top:820.5px"><svg class="ic" width="19" height="15" viewBox="0 0 19 15"><path d="M2.4 8 L6.9 12.2 L16.8 3" fill="none" stroke="#5ec51f" stroke-width="3.3" stroke-linecap="round" stroke-linejoin="miter"/></svg></div>
<div class="a" style="left:903.5px;top:820.5px"><svg class="ic" width="19" height="15" viewBox="0 0 19 15"><path d="M2.4 8 L6.9 12.2 L16.8 3" fill="none" stroke="#5ec51f" stroke-width="3.3" stroke-linecap="round" stroke-linejoin="miter"/></svg></div>
<div class="a" style="left:953.5px;top:820.5px"><svg class="ic" width="19" height="15" viewBox="0 0 19 15"><path d="M2.4 8 L6.9 12.2 L16.8 3" fill="none" stroke="#5ec51f" stroke-width="3.3" stroke-linecap="round" stroke-linejoin="miter"/></svg></div>
<div class="a" style="left:1003.5px;top:820.5px"><svg class="ic" width="19" height="15" viewBox="0 0 19 15"><path d="M2.4 8 L6.9 12.2 L16.8 3" fill="none" stroke="#5ec51f" stroke-width="3.3" stroke-linecap="round" stroke-linejoin="miter"/></svg></div>
<div class="a" style="left:1053.5px;top:820.5px"><svg class="ic" width="19" height="15" viewBox="0 0 19 15"><path d="M2.4 8 L6.9 12.2 L16.8 3" fill="none" stroke="#5ec51f" stroke-width="3.3" stroke-linecap="round" stroke-linejoin="miter"/></svg></div>
<div class="a" style="left:1103.5px;top:820.5px"><svg class="ic" width="19" height="15" viewBox="0 0 19 15"><path d="M2.4 8 L6.9 12.2 L16.8 3" fill="none" stroke="#5ec51f" stroke-width="3.3" stroke-linecap="round" stroke-linejoin="miter"/></svg></div>
<div class="a" style="left:1153.5px;top:820.5px"><svg class="ic" width="19" height="15" viewBox="0 0 19 15"><path d="M2.4 8 L6.9 12.2 L16.8 3" fill="none" stroke="#5ec51f" stroke-width="3.3" stroke-linecap="round" stroke-linejoin="miter"/></svg></div>
<div class="a cell" style="font-size:17.4px;left:280.5px;top:846.25px">J0110017</div>
<div class="a cell" style="left:430px;top:846.25px">R44 - Doornbosch Rd</div>
<div class="a cell" style="font-size:17.5px;left:778.5px;width:120px;text-align:center;top:846.25px">9a94</div>
<div class="a cell" style="font-size:17.6px;left:1194.5px;top:846.25px">331090267503</div>
<div class="a cell" style="left:1311.5px;width:120px;text-align:center;top:846.25px">MX</div>
<div class="a cell" style="font-size:17.6px;left:1408.5px;top:846.25px">7083</div>
<div class="a cell" style="font-size:17.5px;left:1471px;top:846.25px">41.13.192.133:42665</div>
<div class="a cell" style="left:1670px;top:846.25px">STLB</div>
<div class="a" style="left:389.5px;top:856.75px"><svg class="ic" width="19" height="15" viewBox="0 0 19 15"><path d="M2.4 8 L6.9 12.2 L16.8 3" fill="none" stroke="#5ec51f" stroke-width="3.3" stroke-linecap="round" stroke-linejoin="miter"/></svg></div>
<div class="a" style="left:903.5px;top:856.75px"><svg class="ic" width="19" height="15" viewBox="0 0 19 15"><path d="M2.4 8 L6.9 12.2 L16.8 3" fill="none" stroke="#5ec51f" stroke-width="3.3" stroke-linecap="round" stroke-linejoin="miter"/></svg></div>
<div class="a" style="left:953.5px;top:856.75px"><svg class="ic" width="19" height="15" viewBox="0 0 19 15"><path d="M2.4 8 L6.9 12.2 L16.8 3" fill="none" stroke="#5ec51f" stroke-width="3.3" stroke-linecap="round" stroke-linejoin="miter"/></svg></div>
<div class="a" style="left:1003.5px;top:856.75px"><svg class="ic" width="19" height="15" viewBox="0 0 19 15"><path d="M2.4 8 L6.9 12.2 L16.8 3" fill="none" stroke="#5ec51f" stroke-width="3.3" stroke-linecap="round" stroke-linejoin="miter"/></svg></div>
<div class="a" style="left:1054px;top:855.75px"><svg class="ic" width="18" height="18" viewBox="0 0 18 18"><path d="M2.2 2.2 L15.8 15.8 M15.8 2.2 L2.2 15.8" fill="none" stroke="#d12a22" stroke-width="3.6"/></svg></div>
<div class="a" style="left:1103.5px;top:856.75px"><svg class="ic" width="19" height="15" viewBox="0 0 19 15"><path d="M2.4 8 L6.9 12.2 L16.8 3" fill="none" stroke="#5ec51f" stroke-width="3.3" stroke-linecap="round" stroke-linejoin="miter"/></svg></div>
<div class="a" style="left:1154px;top:855.75px"><svg class="ic" width="18" height="18" viewBox="0 0 18 18"><path d="M2.2 2.2 L15.8 15.8 M15.8 2.2 L2.2 15.8" fill="none" stroke="#d12a22" stroke-width="3.6"/></svg></div>
<div class="a cell" style="font-size:17.4px;left:280.5px;top:882.5px">J0110018</div>
<div class="a cell" style="left:430px;top:882.5px">R44 - Dorp St</div>
<div class="a cell" style="font-size:17.5px;left:778.5px;width:120px;text-align:center;top:882.5px">a385</div>
<div class="a cell" style="font-size:17.6px;left:1194.5px;top:882.5px">3310130f5803</div>
<div class="a cell" style="left:1311.5px;width:120px;text-align:center;top:882.5px">MX</div>
<div class="a cell" style="font-size:17.6px;left:1408.5px;top:882.5px">7083</div>
<div class="a cell" style="font-size:17.5px;left:1471px;top:882.5px">105.245.239.175:5546</div>
<div class="a cell" style="left:1670px;top:882.5px">STLB</div>
<div class="a" style="left:389.5px;top:893.0px"><svg class="ic" width="19" height="15" viewBox="0 0 19 15"><path d="M2.4 8 L6.9 12.2 L16.8 3" fill="none" stroke="#5ec51f" stroke-width="3.3" stroke-linecap="round" stroke-linejoin="miter"/></svg></div>
<div class="a" style="left:903.5px;top:893.0px"><svg class="ic" width="19" height="15" viewBox="0 0 19 15"><path d="M2.4 8 L6.9 12.2 L16.8 3" fill="none" stroke="#5ec51f" stroke-width="3.3" stroke-linecap="round" stroke-linejoin="miter"/></svg></div>
<div class="a" style="left:953.5px;top:893.0px"><svg class="ic" width="19" height="15" viewBox="0 0 19 15"><path d="M2.4 8 L6.9 12.2 L16.8 3" fill="none" stroke="#5ec51f" stroke-width="3.3" stroke-linecap="round" stroke-linejoin="miter"/></svg></div>
<div class="a" style="left:1003.5px;top:893.0px"><svg class="ic" width="19" height="15" viewBox="0 0 19 15"><path d="M2.4 8 L6.9 12.2 L16.8 3" fill="none" stroke="#5ec51f" stroke-width="3.3" stroke-linecap="round" stroke-linejoin="miter"/></svg></div>
<div class="a" style="left:1054px;top:892.0px"><svg class="ic" width="18" height="18" viewBox="0 0 18 18"><path d="M2.2 2.2 L15.8 15.8 M15.8 2.2 L2.2 15.8" fill="none" stroke="#d12a22" stroke-width="3.6"/></svg></div>
<div class="a" style="left:1103.5px;top:893.0px"><svg class="ic" width="19" height="15" viewBox="0 0 19 15"><path d="M2.4 8 L6.9 12.2 L16.8 3" fill="none" stroke="#5ec51f" stroke-width="3.3" stroke-linecap="round" stroke-linejoin="miter"/></svg></div>
<div class="a" style="left:1153.5px;top:893.0px"><svg class="ic" width="19" height="15" viewBox="0 0 19 15"><path d="M2.4 8 L6.9 12.2 L16.8 3" fill="none" stroke="#5ec51f" stroke-width="3.3" stroke-linecap="round" stroke-linejoin="miter"/></svg></div>
<div class="a cell" style="font-size:17.4px;left:280.5px;top:918.75px">J0110019</div>
<div class="a cell" style="left:430px;top:918.75px">R44 - Wiedenhof St (Pedestrian Crossing)</div>
<div class="a cell" style="font-size:17.5px;left:778.5px;width:120px;text-align:center;top:918.75px">861d</div>
<div class="a cell" style="font-size:17.6px;left:1194.5px;top:918.75px">3310403a5803</div>
<div class="a cell" style="left:1311.5px;width:120px;text-align:center;top:918.75px">MX</div>
<div class="a cell" style="font-size:17.6px;left:1408.5px;top:918.75px">7083</div>
<div class="a cell" style="font-size:17.5px;left:1471px;top:918.75px">105.245.239.175:5551</div>
<div class="a cell" style="left:1670px;top:918.75px">STLB</div>
<div class="a" style="left:389.5px;top:929.25px"><svg class="ic" width="19" height="15" viewBox="0 0 19 15"><path d="M2.4 8 L6.9 12.2 L16.8 3" fill="none" stroke="#5ec51f" stroke-width="3.3" stroke-linecap="round" stroke-linejoin="miter"/></svg></div>
<div class="a" style="left:903.5px;top:929.25px"><svg class="ic" width="19" height="15" viewBox="0 0 19 15"><path d="M2.4 8 L6.9 12.2 L16.8 3" fill="none" stroke="#5ec51f" stroke-width="3.3" stroke-linecap="round" stroke-linejoin="miter"/></svg></div>
<div class="a" style="left:953.5px;top:929.25px"><svg class="ic" width="19" height="15" viewBox="0 0 19 15"><path d="M2.4 8 L6.9 12.2 L16.8 3" fill="none" stroke="#5ec51f" stroke-width="3.3" stroke-linecap="round" stroke-linejoin="miter"/></svg></div>
<div class="a" style="left:1003.5px;top:929.25px"><svg class="ic" width="19" height="15" viewBox="0 0 19 15"><path d="M2.4 8 L6.9 12.2 L16.8 3" fill="none" stroke="#5ec51f" stroke-width="3.3" stroke-linecap="round" stroke-linejoin="miter"/></svg></div>
<div class="a" style="left:1054px;top:928.25px"><svg class="ic" width="18" height="18" viewBox="0 0 18 18"><path d="M2.2 2.2 L15.8 15.8 M15.8 2.2 L2.2 15.8" fill="none" stroke="#d12a22" stroke-width="3.6"/></svg></div>
<div class="a" style="left:1104px;top:928.25px"><svg class="ic" width="18" height="18" viewBox="0 0 18 18"><path d="M2.2 2.2 L15.8 15.8 M15.8 2.2 L2.2 15.8" fill="none" stroke="#d12a22" stroke-width="3.6"/></svg></div>
<div class="a" style="left:1153.5px;top:929.25px"><svg class="ic" width="19" height="15" viewBox="0 0 19 15"><path d="M2.4 8 L6.9 12.2 L16.8 3" fill="none" stroke="#5ec51f" stroke-width="3.3" stroke-linecap="round" stroke-linejoin="miter"/></svg></div>
<div class="a cell" style="font-size:17.4px;left:280.5px;top:955.0px">J0110020</div>
<div class="a cell" style="left:430px;top:955.0px">R44 - Adam Tas</div>
<div class="a cell" style="font-size:17.5px;left:778.5px;width:120px;text-align:center;top:955.0px">8353</div>
<div class="a cell" style="font-size:17.6px;left:1194.5px;top:955.0px">3310478c7503</div>
<div class="a cell" style="left:1311.5px;width:120px;text-align:center;top:955.0px">MX</div>
<div class="a cell" style="font-size:17.6px;left:1408.5px;top:955.0px">7083</div>
<div class="a cell" style="font-size:17.5px;left:1471px;top:955.0px">105.245.231.202:22816</div>
<div class="a cell" style="left:1670px;top:955.0px">STLB</div>
<div class="a" style="left:389.5px;top:965.5px"><svg class="ic" width="19" height="15" viewBox="0 0 19 15"><path d="M2.4 8 L6.9 12.2 L16.8 3" fill="none" stroke="#5ec51f" stroke-width="3.3" stroke-linecap="round" stroke-linejoin="miter"/></svg></div>
<div class="a" style="left:903.5px;top:965.5px"><svg class="ic" width="19" height="15" viewBox="0 0 19 15"><path d="M2.4 8 L6.9 12.2 L16.8 3" fill="none" stroke="#5ec51f" stroke-width="3.3" stroke-linecap="round" stroke-linejoin="miter"/></svg></div>
<div class="a" style="left:953.5px;top:965.5px"><svg class="ic" width="19" height="15" viewBox="0 0 19 15"><path d="M2.4 8 L6.9 12.2 L16.8 3" fill="none" stroke="#5ec51f" stroke-width="3.3" stroke-linecap="round" stroke-linejoin="miter"/></svg></div>
<div class="a" style="left:1003.5px;top:965.5px"><svg class="ic" width="19" height="15" viewBox="0 0 19 15"><path d="M2.4 8 L6.9 12.2 L16.8 3" fill="none" stroke="#5ec51f" stroke-width="3.3" stroke-linecap="round" stroke-linejoin="miter"/></svg></div>
<div class="a" style="left:1054px;top:964.5px"><svg class="ic" width="18" height="18" viewBox="0 0 18 18"><path d="M2.2 2.2 L15.8 15.8 M15.8 2.2 L2.2 15.8" fill="none" stroke="#d12a22" stroke-width="3.6"/></svg></div>
<div class="a" style="left:1103.5px;top:965.5px"><svg class="ic" width="19" height="15" viewBox="0 0 19 15"><path d="M2.4 8 L6.9 12.2 L16.8 3" fill="none" stroke="#5ec51f" stroke-width="3.3" stroke-linecap="round" stroke-linejoin="miter"/></svg></div>
<div class="a" style="left:1153.5px;top:965.5px"><svg class="ic" width="19" height="15" viewBox="0 0 19 15"><path d="M2.4 8 L6.9 12.2 L16.8 3" fill="none" stroke="#5ec51f" stroke-width="3.3" stroke-linecap="round" stroke-linejoin="miter"/></svg></div>
<div class="a cell" style="font-size:17.4px;left:280.5px;top:991.25px">J0110021</div>
<div class="a cell" style="left:430px;top:991.25px">R44 - Alexander St</div>
<div class="a cell" style="font-size:17.5px;left:778.5px;width:120px;text-align:center;top:991.25px">6c91</div>
<div class="a cell" style="font-size:17.6px;left:1194.5px;top:991.25px">3310e91c5803</div>
<div class="a cell" style="left:1311.5px;width:120px;text-align:center;top:991.25px">MX</div>
<div class="a cell" style="font-size:17.6px;left:1408.5px;top:991.25px">7083</div>
<div class="a cell" style="font-size:17.5px;left:1471px;top:991.25px">41.13.246.187:56498</div>
<div class="a cell" style="left:1670px;top:991.25px">STLB</div>
<div class="a" style="left:389.5px;top:1001.75px"><svg class="ic" width="19" height="15" viewBox="0 0 19 15"><path d="M2.4 8 L6.9 12.2 L16.8 3" fill="none" stroke="#5ec51f" stroke-width="3.3" stroke-linecap="round" stroke-linejoin="miter"/></svg></div>
<div class="a" style="left:903.5px;top:1001.75px"><svg class="ic" width="19" height="15" viewBox="0 0 19 15"><path d="M2.4 8 L6.9 12.2 L16.8 3" fill="none" stroke="#5ec51f" stroke-width="3.3" stroke-linecap="round" stroke-linejoin="miter"/></svg></div>
<div class="a" style="left:953.5px;top:1001.75px"><svg class="ic" width="19" height="15" viewBox="0 0 19 15"><path d="M2.4 8 L6.9 12.2 L16.8 3" fill="none" stroke="#5ec51f" stroke-width="3.3" stroke-linecap="round" stroke-linejoin="miter"/></svg></div>
<div class="a" style="left:1003.5px;top:1001.75px"><svg class="ic" width="19" height="15" viewBox="0 0 19 15"><path d="M2.4 8 L6.9 12.2 L16.8 3" fill="none" stroke="#5ec51f" stroke-width="3.3" stroke-linecap="round" stroke-linejoin="miter"/></svg></div>
<div class="a" style="left:1053.5px;top:1001.75px"><svg class="ic" width="19" height="15" viewBox="0 0 19 15"><path d="M2.4 8 L6.9 12.2 L16.8 3" fill="none" stroke="#5ec51f" stroke-width="3.3" stroke-linecap="round" stroke-linejoin="miter"/></svg></div>
<div class="a" style="left:1103.5px;top:1001.75px"><svg class="ic" width="19" height="15" viewBox="0 0 19 15"><path d="M2.4 8 L6.9 12.2 L16.8 3" fill="none" stroke="#5ec51f" stroke-width="3.3" stroke-linecap="round" stroke-linejoin="miter"/></svg></div>
<div class="a" style="left:1153.5px;top:1001.75px"><svg class="ic" width="19" height="15" viewBox="0 0 19 15"><path d="M2.4 8 L6.9 12.2 L16.8 3" fill="none" stroke="#5ec51f" stroke-width="3.3" stroke-linecap="round" stroke-linejoin="miter"/></svg></div>
<div class="a cell" style="font-size:17.4px;left:280.5px;top:1027.5px">J0110022</div>
<div class="a cell" style="left:430px;top:1027.5px">R44 - George Blake</div>
<div class="a cell" style="font-size:17.5px;left:778.5px;width:120px;text-align:center;top:1027.5px">4f56</div>
<div class="a cell" style="font-size:17.6px;left:1194.5px;top:1027.5px">3310ed4a7303</div>
<div class="a cell" style="left:1311.5px;width:120px;text-align:center;top:1027.5px">MX</div>
<div class="a cell" style="font-size:17.6px;left:1408.5px;top:1027.5px">7083</div>
<div class="a cell" style="font-size:17.5px;left:1471px;top:1027.5px">105.245.241.190:22711</div>
<div class="a cell" style="left:1670px;top:1027.5px">STLB</div>
<div class="a" style="left:389.5px;top:1038.0px"><svg class="ic" width="19" height="15" viewBox="0 0 19 15"><path d="M2.4 8 L6.9 12.2 L16.8 3" fill="none" stroke="#5ec51f" stroke-width="3.3" stroke-linecap="round" stroke-linejoin="miter"/></svg></div>
<div class="a" style="left:903.5px;top:1038.0px"><svg class="ic" width="19" height="15" viewBox="0 0 19 15"><path d="M2.4 8 L6.9 12.2 L16.8 3" fill="none" stroke="#5ec51f" stroke-width="3.3" stroke-linecap="round" stroke-linejoin="miter"/></svg></div>
<div class="a" style="left:953.5px;top:1038.0px"><svg class="ic" width="19" height="15" viewBox="0 0 19 15"><path d="M2.4 8 L6.9 12.2 L16.8 3" fill="none" stroke="#5ec51f" stroke-width="3.3" stroke-linecap="round" stroke-linejoin="miter"/></svg></div>
<div class="a" style="left:1003.5px;top:1038.0px"><svg class="ic" width="19" height="15" viewBox="0 0 19 15"><path d="M2.4 8 L6.9 12.2 L16.8 3" fill="none" stroke="#5ec51f" stroke-width="3.3" stroke-linecap="round" stroke-linejoin="miter"/></svg></div>
<div class="a" style="left:1053.5px;top:1038.0px"><svg class="ic" width="19" height="15" viewBox="0 0 19 15"><path d="M2.4 8 L6.9 12.2 L16.8 3" fill="none" stroke="#5ec51f" stroke-width="3.3" stroke-linecap="round" stroke-linejoin="miter"/></svg></div>
<div class="a" style="left:1103.5px;top:1038.0px"><svg class="ic" width="19" height="15" viewBox="0 0 19 15"><path d="M2.4 8 L6.9 12.2 L16.8 3" fill="none" stroke="#5ec51f" stroke-width="3.3" stroke-linecap="round" stroke-linejoin="miter"/></svg></div>
<div class="a" style="left:1153.5px;top:1038.0px"><svg class="ic" width="19" height="15" viewBox="0 0 19 15"><path d="M2.4 8 L6.9 12.2 L16.8 3" fill="none" stroke="#5ec51f" stroke-width="3.3" stroke-linecap="round" stroke-linejoin="miter"/></svg></div>
<div class="a cell" style="font-size:17.4px;left:280.5px;top:1063.75px">J0110023</div>
<div class="a cell" style="left:430px;top:1063.75px">R44 - Merriman Avenue</div>
<div class="a cell" style="font-size:17.5px;left:778.5px;width:120px;text-align:center;top:1063.75px">9c7b</div>
<div class="a cell" style="font-size:17.6px;left:1194.5px;top:1063.75px">3310f63e5803</div>
<div class="a cell" style="left:1311.5px;width:120px;text-align:center;top:1063.75px">MX</div>
<div class="a cell" style="font-size:17.6px;left:1408.5px;top:1063.75px">7083</div>
<div class="a cell" style="font-size:17.5px;left:1471px;top:1063.75px">105.245.226.198:2633</div>
<div class="a cell" style="left:1670px;top:1063.75px">STLB</div>
<div class="a" style="left:389.5px;top:1074.25px"><svg class="ic" width="19" height="15" viewBox="0 0 19 15"><path d="M2.4 8 L6.9 12.2 L16.8 3" fill="none" stroke="#5ec51f" stroke-width="3.3" stroke-linecap="round" stroke-linejoin="miter"/></svg></div>
<div class="a" style="left:903.5px;top:1074.25px"><svg class="ic" width="19" height="15" viewBox="0 0 19 15"><path d="M2.4 8 L6.9 12.2 L16.8 3" fill="none" stroke="#5ec51f" stroke-width="3.3" stroke-linecap="round" stroke-linejoin="miter"/></svg></div>
<div class="a" style="left:953.5px;top:1074.25px"><svg class="ic" width="19" height="15" viewBox="0 0 19 15"><path d="M2.4 8 L6.9 12.2 L16.8 3" fill="none" stroke="#5ec51f" stroke-width="3.3" stroke-linecap="round" stroke-linejoin="miter"/></svg></div>
<div class="a" style="left:1003.5px;top:1074.25px"><svg class="ic" width="19" height="15" viewBox="0 0 19 15"><path d="M2.4 8 L6.9 12.2 L16.8 3" fill="none" stroke="#5ec51f" stroke-width="3.3" stroke-linecap="round" stroke-linejoin="miter"/></svg></div>
<div class="a" style="left:1053.5px;top:1074.25px"><svg class="ic" width="19" height="15" viewBox="0 0 19 15"><path d="M2.4 8 L6.9 12.2 L16.8 3" fill="none" stroke="#5ec51f" stroke-width="3.3" stroke-linecap="round" stroke-linejoin="miter"/></svg></div>
<div class="a" style="left:1103.5px;top:1074.25px"><svg class="ic" width="19" height="15" viewBox="0 0 19 15"><path d="M2.4 8 L6.9 12.2 L16.8 3" fill="none" stroke="#5ec51f" stroke-width="3.3" stroke-linecap="round" stroke-linejoin="miter"/></svg></div>
<div class="a" style="left:1153.5px;top:1074.25px"><svg class="ic" width="19" height="15" viewBox="0 0 19 15"><path d="M2.4 8 L6.9 12.2 L16.8 3" fill="none" stroke="#5ec51f" stroke-width="3.3" stroke-linecap="round" stroke-linejoin="miter"/></svg></div>
<div class="a th" style="left:1334px;top:1112px;line-height:24px">Page Size</div>
<div class="a" style="left:1419px;top:1109px;width:68px;height:29px;background:#fff;border-radius:4px"></div>
<div class="a" style="left:1431px;top:1112px;font-size:18px;color:#000;line-height:24px">20</div>
<svg class="a" style="left:1472px;top:1120px" width="11" height="7" viewBox="0 0 11 7"><path d="M1 1 L5.5 5.5 L10 1" fill="none" stroke="#000" stroke-width="2"/></svg>
<div class="a pb" style="left:1497px;top:1107px;width:50px;height:32px;">First</div>
<div class="a pb" style="left:1552px;top:1107px;width:50px;height:32px;">Prev</div>
<div class="a pb" style="left:1616px;top:1107px;width:24px;height:32px;color:#f0f0f0;border-color:#8a8a8a">1</div>
<div class="a pb" style="left:1645px;top:1107px;width:25px;height:32px;color:#9a9a9a;border-color:#6a6a6a">2</div>
<div class="a pb" style="left:1684px;top:1107px;width:51px;height:32px;">Next</div>
<div class="a pb" style="left:1740px;top:1107px;width:48px;height:32px;">Last</div>
<div class="a btn" style="left:274px;top:1148px;width:174px;height:47px">Download XLSX</div>
<div class="a btn" style="left:453px;top:1148px;width:162px;height:47px">Download PDF</div>
</body></html>
